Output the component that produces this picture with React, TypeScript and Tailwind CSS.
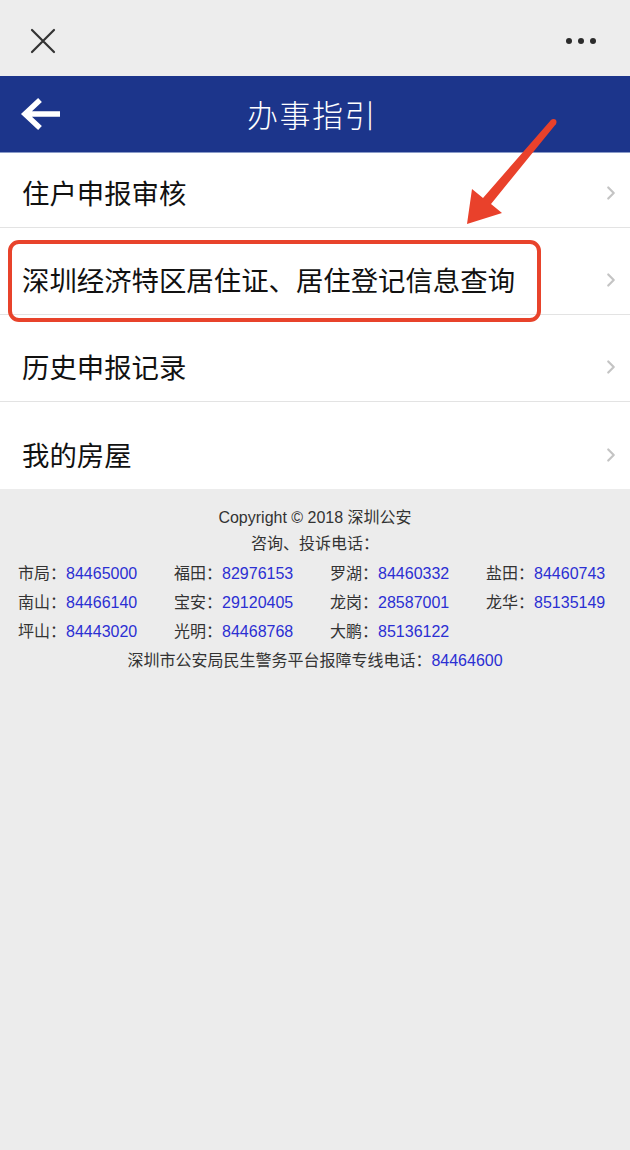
import { ChevronRight } from 'lucide-react';

const phones: [string, string][] = [
  ['市局', '84465000'],
  ['福田', '82976153'],
  ['罗湖', '84460332'],
  ['盐田', '84460743'],
  ['南山', '84466140'],
  ['宝安', '29120405'],
  ['龙岗', '28587001'],
  ['龙华', '85135149'],
  ['坪山', '84443020'],
  ['光明', '84468768'],
  ['大鹏', '85136122'],
];

const rows = [
  { label: '住户申报审核', cls: 'h-[75px] pt-[6px] border-b border-[#e3e3e3]' },
  { label: '深圳经济特区居住证、居住登记信息查询', cls: 'h-[87px] pt-[18px] border-b border-[#e3e3e3]' },
  { label: '历史申报记录', cls: 'h-[87px] pt-[18px] border-b border-[#e3e3e3]' },
  { label: '我的房屋', cls: 'h-[87px] pt-[18px]' },
];

export default function App() {
  return (
    <div
      className="relative min-h-screen w-full bg-[#ececec]"
      style={{ fontFamily: '"Liberation Sans", "Noto Sans CJK SC", sans-serif' }}
    >
      {/* Top bar */}
      <div className="flex h-[76px] items-center justify-between bg-[#ededed] pl-[30px] pr-[30px]">
        <svg width="26" height="26" viewBox="0 0 26 26" className="mt-[6px]">
          <path d="M2 2 L24 24 M24 2 L2 24" stroke="#333" strokeWidth="2.2" strokeLinecap="round" />
        </svg>
        <svg width="34" height="8" viewBox="0 0 34 8" className="mr-[2px] mt-[6px]">
          <circle cx="5" cy="4" r="3" fill="#2b2b2b" />
          <circle cx="17" cy="4" r="3" fill="#2b2b2b" />
          <circle cx="29" cy="4" r="3" fill="#2b2b2b" />
        </svg>
      </div>

      {/* Header */}
      <div className="relative flex h-[77px] items-center justify-center border-b border-[#8a9bc8] bg-[#1c358b]">
        <svg width="44" height="36" viewBox="0 0 44 36" className="absolute left-[20px] top-[21px]">
          <path d="M40 17 H6 M20 3 L5 17 L20 31" stroke="#fff" strokeWidth="5.5" fill="none" strokeLinejoin="miter" />
        </svg>
        <span
          className="mr-[6px] text-[31px] tracking-[1.5px] text-white"
          style={{ fontFamily: '"Noto Sans CJK SC", sans-serif', fontWeight: 300 }}
        >
          办事指引
        </span>
      </div>

      {/* List */}
      <div className="bg-white">
        {rows.map((r) => (
          <div key={r.label} className={`flex items-center justify-between pl-[22px] pr-[8px] ${r.cls}`}>
            <span
              className="text-[27.4px] leading-none text-[#111]"
              style={{ fontFamily: '"Noto Sans CJK SC", sans-serif' }}
            >
              {r.label}
            </span>
            <ChevronRight className="h-[22px] w-[22px] text-[#c4c4c4]" strokeWidth={2.4} />
          </div>
        ))}
      </div>

      {/* Footer */}
      <div className="pt-[16px] text-[16px] text-[#333]">
        <div className="text-center leading-[26px]">Copyright © 2018 深圳公安</div>
        <div className="text-center leading-[26px]">咨询、投诉电话：</div>
        <div className="mt-[2px] grid grid-cols-[repeat(4,156px)] pl-[18px] leading-[29px]">
          {phones.map(([name, num]) => (
            <div key={name} className="whitespace-nowrap">
              {name}：<span className="text-[#2b2fd3]">{num}</span>
            </div>
          ))}
        </div>
        <div className="text-center leading-[29px]">
          深圳市公安局民生警务平台报障专线电话：<span className="text-[#2b2fd3]">84464600</span>
        </div>
      </div>

      {/* Annotations */}
      <div className="absolute left-[8px] top-[240px] h-[82px] w-[533px] rounded-[11px] border-[4px] border-[#e8432b]" />
      <svg className="absolute left-0 top-0" width="630" height="240" viewBox="0 0 630 240">
        <polygon
          points="551,120 483,198 472,189 467,224 502,213 491,204 556,124"
          fill="#e9412b"
        />
        <circle cx="553.5" cy="122" r="3" fill="#e9412b" />
      </svg>
    </div>
  );
}
